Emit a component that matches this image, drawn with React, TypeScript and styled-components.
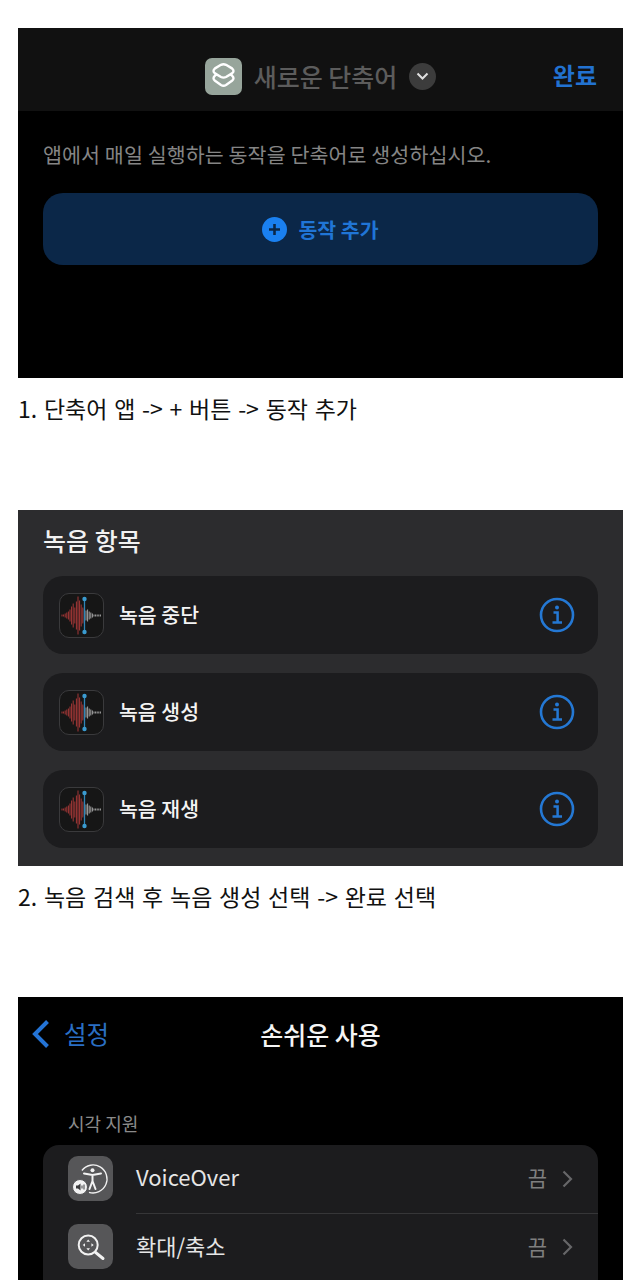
import React from "react";
import styled, { createGlobalStyle } from "styled-components";

const GlobalStyle = createGlobalStyle`
  html, body {
    margin: 0;
    padding: 0;
    background: #ffffff;
    height: 1280px;
    overflow: hidden;
    font-family: "Noto Sans CJK KR", "Noto Sans", sans-serif;
  }
`;

const Page = styled.div`
  width: 605px;
  height: 1280px;
  padding: 28px 0 0 18px;
  overflow: hidden;
`;

const Shot = styled.div<{ $bg: string; $height: number }>`
  background: ${(p) => p.$bg};
  height: ${(p) => p.$height}px;
  overflow: hidden;
`;

const Caption = styled.div<{ $height: number }>`
  height: ${(p) => p.$height}px;
  padding-top: 16px;
  font-size: 23px;
  line-height: 28px;
  word-spacing: 1.6px;
  color: #111111;
`;

const NavBar = styled.div`
  height: 83px;
  box-sizing: border-box;
  background: #111111;
  display: grid;
  grid-template-columns: 1fr auto 1fr;
  align-items: center;
  padding: 13px 26px 0;
`;

const TitleGroup = styled.div`
  grid-column: 2;
  display: flex;
  align-items: center;
  gap: 12px;
`;

const AppIcon = styled.div`
  width: 37px;
  height: 37px;
  border-radius: 7px;
  background: #97a59b;
  display: flex;
  align-items: center;
  justify-content: center;
`;

const DimTitle = styled.span`
  font-size: 25px;
  line-height: 30px;
  font-weight: 500;
  color: #5c5c5c;
`;

const ChevronBadge = styled.div`
  width: 27px;
  height: 27px;
  border-radius: 50%;
  background: #3c3c3c;
  display: flex;
  align-items: center;
  justify-content: center;
`;

const DoneLink = styled.span`
  justify-self: end;
  padding-bottom: 2px;
  font-size: 24px;
  line-height: 30px;
  font-weight: 700;
  color: #2272d0;
`;

const Hint = styled.div`
  padding: 29px 25px 0;
  font-size: 20.6px;
  line-height: 28px;
  letter-spacing: 0.1px;
  color: #858585;
`;

const AddAction = styled.div`
  margin: 25px 25px 0;
  height: 72px;
  border-radius: 20px;
  background: #0b2748;
  display: flex;
  align-items: center;
  justify-content: center;
  gap: 11px;
`;

const AddLabel = styled.span`
  font-size: 20.5px;
  line-height: 28px;
  font-weight: 700;
  color: #2075d6;
`;

const SectionTitle = styled.div`
  padding: 13px 25px 0;
  font-size: 25px;
  line-height: 34px;
  font-weight: 500;
  color: #f2f2f2;
`;

const RecordList = styled.div`
  margin: 19px 25px 0;
  display: flex;
  flex-direction: column;
  gap: 19px;
`;

const RecordRow = styled.div`
  height: 78px;
  border-radius: 20px;
  background: #1c1c1e;
  display: flex;
  align-items: center;
  padding: 0 23px 0 16px;
`;

const RecordIcon = styled.div`
  width: 45px;
  height: 45px;
  box-sizing: border-box;
  border-radius: 10px;
  border: 1px solid #3a3a3c;
  background: #161616;
  flex-shrink: 0;
`;

const RecordLabel = styled.span`
  margin-left: 15px;
  padding-bottom: 3px;
  flex: 1;
  font-size: 20.5px;
  line-height: 28px;
  font-weight: 500;
  color: #f4f4f4;
`;

const SettingsBar = styled.div`
  height: 76px;
  box-sizing: border-box;
  padding: 0 14px 3px;
  display: grid;
  grid-template-columns: 1fr auto 1fr;
  align-items: center;
`;

const BackLink = styled.div`
  display: flex;
  align-items: center;
  gap: 14px;
`;

const BackLabel = styled.span`
  font-size: 24.5px;
  line-height: 30px;
  color: #2a6fc4;
`;

const SettingsTitle = styled.span`
  font-size: 25px;
  line-height: 30px;
  font-weight: 500;
  color: #f5f5f5;
`;

const GroupLabel = styled.div`
  padding: 38px 0 0 50px;
  font-size: 18px;
  line-height: 24px;
  color: #8a8a8a;
`;

const SettingsGroup = styled.div`
  margin: 10px 25px 0;
  background: #1c1c1e;
  border-radius: 16px 16px 0 0;
`;

const SettingsRow = styled.div`
  height: 68px;
  display: flex;
  align-items: center;
  padding-left: 25px;
`;

const SettingsIcon = styled.div`
  width: 45px;
  height: 45px;
  margin-bottom: 1px;
  border-radius: 10px;
  background: #565658;
  display: flex;
  align-items: center;
  justify-content: center;
  flex-shrink: 0;
`;

const RowBody = styled.div<{ $divider?: boolean }>`
  flex: 1;
  height: 100%;
  margin-left: 23px;
  padding-right: 25px;
  display: flex;
  align-items: center;
  border-bottom: ${(p) => (p.$divider ? "1px solid #363638" : "none")};
`;

const RowLabel = styled.span`
  flex: 1;
  padding-bottom: 5px;
  font-size: 22px;
  line-height: 28px;
  color: #e6e6e6;
`;

const RowValue = styled.span`
  padding-bottom: 3px;
  font-size: 21px;
  line-height: 28px;
  color: #7f7f7f;
  margin-right: 15px;
`;

// half heights of the recording wave, left to right
const waveBars = [1, 1, 2, 3, 4, 6, 9, 12, 8, 14, 19, 15, 11, 8, 7, 5, 6, 4, 3, 2, 1, 1, 1, 1, 1];

const WaveIcon = () => (
  <RecordIcon>
    <svg width="43" height="43" viewBox="0 0 43 43">
      {waveBars.map((h, i) => {
        const x = 2 + i * 1.6;
        return (
          <line
            key={i}
            x1={x}
            x2={x}
            y1={21.5 - h}
            y2={21.5 + h}
            stroke={i < 14 ? "#c8403f" : "#c8c8c8"}
            strokeWidth="0.8"
          />
        );
      })}
      <line x1="24.5" x2="24.5" y1="5" y2="38" stroke="#2f86b8" strokeWidth="1.3" />
      <circle cx="24.5" cy="5" r="2.2" fill="#3a9bd0" />
      <circle cx="24.5" cy="38" r="2.2" fill="#3a9bd0" />
    </svg>
  </RecordIcon>
);

const InfoIcon = () => (
  <svg width="36" height="36" viewBox="0 0 36 36" fill="none">
    <circle cx="18" cy="18" r="16" stroke="#2478d4" strokeWidth="2.6" />
    <circle cx="18" cy="10.5" r="2" fill="#2478d4" />
    <path d="M14.5 15.5H18.6V25M13.5 25.5H23" stroke="#2478d4" strokeWidth="2.5" />
  </svg>
);

const ShortcutsGlyph = () => (
  <svg width="27" height="29" viewBox="0 0 27 29" fill="none" stroke="#ffffff" strokeWidth="2.4" strokeLinejoin="round">
    <path d="M11 2.8 Q13.5 1.6 16 2.8 L22 6.4 Q25 9 22 11.4 L16 15 Q13.5 16.2 11 15 L5 11.4 Q2 9 5 6.4 Z" />
    <path d="M6.5 12.6 L5 13.6 Q2 16.4 5 18.8 L11 23 Q13.5 24.4 16 23 L22 18.8 Q25 16.4 22 13.6 L20.5 12.6" />
  </svg>
);

const AccessibilityIcon = () => (
  <svg width="38" height="38" viewBox="0 0 38 38" fill="none">
    <path d="M9.9 10.5 A14 14 0 1 1 17 32.4" stroke="#f2f2f2" strokeWidth="1.3" />
    <circle cx="20.5" cy="10.3" r="2" fill="#f2f2f2" />
    <path d="M12 13.5 L20.5 15 L29 13.5 M20.5 15 V21 M20.5 21 L17.5 29 M20.5 21 L23.5 29" stroke="#f2f2f2" strokeWidth="2" strokeLinecap="round" />
    <circle cx="8" cy="27" r="7.5" fill="#f2f2f2" stroke="#565658" strokeWidth="1" />
    <path d="M4 25.5H6L8.5 23.5V30.5L6 28.5H4Z" fill="#3a3a3c" />
    <path d="M10 25.5V28.5M12 24.5V29.5" stroke="#3a3a3c" strokeWidth="1" />
  </svg>
);

const ZoomIcon = () => (
  <svg width="32" height="32" viewBox="0 0 32 32" fill="none" stroke="#f2f2f2">
    <circle cx="13.2" cy="14" r="9.5" strokeWidth="2" />
    <path d="M20.5 21.3L28 27.5" strokeWidth="3" strokeLinecap="round" />
    <path d="M13.2 8.5L15 10.8H11.4ZM13.2 19.5L15 17.2H11.4ZM7.7 14L10 12.2V15.8ZM18.7 14L16.4 12.2V15.8Z" fill="#f2f2f2" stroke="none" />
  </svg>
);

const RowChevron = () => (
  <svg width="11" height="18" viewBox="0 0 11 18" fill="none">
    <path d="M1.5 1.5L9 9L1.5 16.5" stroke="#666668" strokeWidth="2.2" />
  </svg>
);

const records = ["녹음 중단", "녹음 생성", "녹음 재생"];

const App = () => {
  return (
    <Page>
      <GlobalStyle />
      <Shot $bg="#000000" $height={350}>
        <NavBar>
          <TitleGroup>
            <AppIcon>
              <ShortcutsGlyph />
            </AppIcon>
            <DimTitle>새로운 단축어</DimTitle>
            <ChevronBadge>
              <svg width="13" height="9" viewBox="0 0 13 9" fill="none">
                <path d="M1.5 1.5L6.5 6.5L11.5 1.5" stroke="#e0e0e0" strokeWidth="2" />
              </svg>
            </ChevronBadge>
          </TitleGroup>
          <DoneLink>완료</DoneLink>
        </NavBar>
        <Hint>앱에서 매일 실행하는 동작을 단축어로 생성하십시오.</Hint>
        <AddAction>
          <svg width="25" height="25" viewBox="0 0 25 25">
            <circle cx="12.5" cy="12.5" r="12.5" fill="#1a80f0" />
            <path d="M12.5 7V18M7 12.5H18" stroke="#0b2748" strokeWidth="2.6" />
          </svg>
          <AddLabel>동작 추가</AddLabel>
        </AddAction>
      </Shot>
      <Caption $height={116}>1. 단축어 앱 -&gt; + 버튼 -&gt; 동작 추가</Caption>
      <Shot $bg="#2c2c2e" $height={356}>
        <SectionTitle>녹음 항목</SectionTitle>
        <RecordList>
          {records.map((label) => (
            <RecordRow key={label}>
              <WaveIcon />
              <RecordLabel>{label}</RecordLabel>
              <InfoIcon />
            </RecordRow>
          ))}
        </RecordList>
      </Shot>
      <Caption $height={115}>2. 녹음 검색 후 녹음 생성 선택 -&gt; 완료 선택</Caption>
      <Shot $bg="#000000" $height={283}>
        <SettingsBar>
          <BackLink>
            <svg width="18" height="30" viewBox="0 0 18 30" fill="none">
              <path d="M15.5 2.5L3 15L15.5 27.5" stroke="#2474d6" strokeWidth="4" />
            </svg>
            <BackLabel>설정</BackLabel>
          </BackLink>
          <SettingsTitle>손쉬운 사용</SettingsTitle>
        </SettingsBar>
        <GroupLabel>시각 지원</GroupLabel>
        <SettingsGroup>
          <SettingsRow>
            <SettingsIcon>
              <AccessibilityIcon />
            </SettingsIcon>
            <RowBody $divider>
              <RowLabel>VoiceOver</RowLabel>
              <RowValue>끔</RowValue>
              <RowChevron />
            </RowBody>
          </SettingsRow>
          <SettingsRow>
            <SettingsIcon>
              <ZoomIcon />
            </SettingsIcon>
            <RowBody>
              <RowLabel>확대/축소</RowLabel>
              <RowValue>끔</RowValue>
              <RowChevron />
            </RowBody>
          </SettingsRow>
        </SettingsGroup>
      </Shot>
    </Page>
  );
};

export default App;
